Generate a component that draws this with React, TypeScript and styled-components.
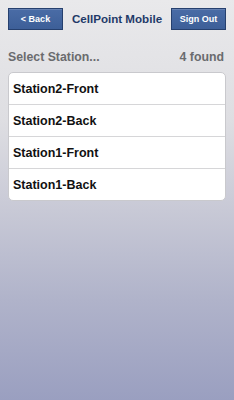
import React from "react";
import styled, { createGlobalStyle } from "styled-components";

const Global = createGlobalStyle`
  html, body { margin: 0; padding: 0; }
  body {
    font-family: "Liberation Sans", Arial, sans-serif;
    background: #e9e9eb;
  }
`;

const Page = styled.div`
  width: 234px;
  height: 400px;
  overflow: hidden;
  background: linear-gradient(
    to bottom,
    #e9e9eb 0px,
    #dedee2 120px,
    #c8c9d6 210px,
    #b0b3ca 300px,
    #9a9fc0 400px
  );
  display: flex;
  flex-direction: column;
`;

const Toolbar = styled.div`
  height: 36px;
  display: flex;
  align-items: center;
  justify-content: space-between;
  padding: 1px 8px 0 8px;
  box-sizing: border-box;
`;

const NavButton = styled.button<{ $w: number }>`
  width: ${(p) => p.$w}px;
  height: 22px;
  border: 1px solid #26406e;
  background: linear-gradient(to bottom, #4a6ca6, #3d5f98);
  color: #ffffff;
  font-family: "Liberation Sans", Arial, sans-serif;
  font-weight: bold;
  font-size: 9px;
  padding: 0;
  box-shadow: inset 0 1px 0 rgba(255, 255, 255, 0.15);
`;

const Title = styled.div`
  font-weight: bold;
  font-size: 11.6px;
  color: #1f3a68;
`;

const Header = styled.div`
  display: flex;
  justify-content: space-between;
  align-items: center;
  padding: 12px 10px 0 8px;
  height: 18px;
  font-weight: bold;
  font-size: 12.3px;
  color: #6a6b6e;
`;

const List = styled.div`
  margin: 6px 8px 0 8px;
  background: #ffffff;
  border: 1px solid #c9c9cd;
  border-radius: 5px;
  overflow: hidden;
`;

const Row = styled.div<{ $last?: boolean }>`
  height: 31px;
  display: flex;
  align-items: center;
  padding-left: 4px;
  font-weight: bold;
  font-size: 12.5px;
  color: #111111;
  border-bottom: ${(p) => (p.$last ? "none" : "1px solid #d6d6d8")};
`;

const stations = ["Station2-Front", "Station2-Back", "Station1-Front", "Station1-Back"];

export default function App() {
  return (
    <Page>
      <Global />
      <Toolbar>
        <NavButton $w={55}>&lt; Back</NavButton>
        <Title>CellPoint Mobile</Title>
        <NavButton $w={55}>Sign Out</NavButton>
      </Toolbar>
      <Header>
        <span>Select Station...</span>
        <span>4 found</span>
      </Header>
      <List>
        {stations.map((s, i) => (
          <Row key={s} $last={i === stations.length - 1}>
            {s}
          </Row>
        ))}
      </List>
    </Page>
  );
}
